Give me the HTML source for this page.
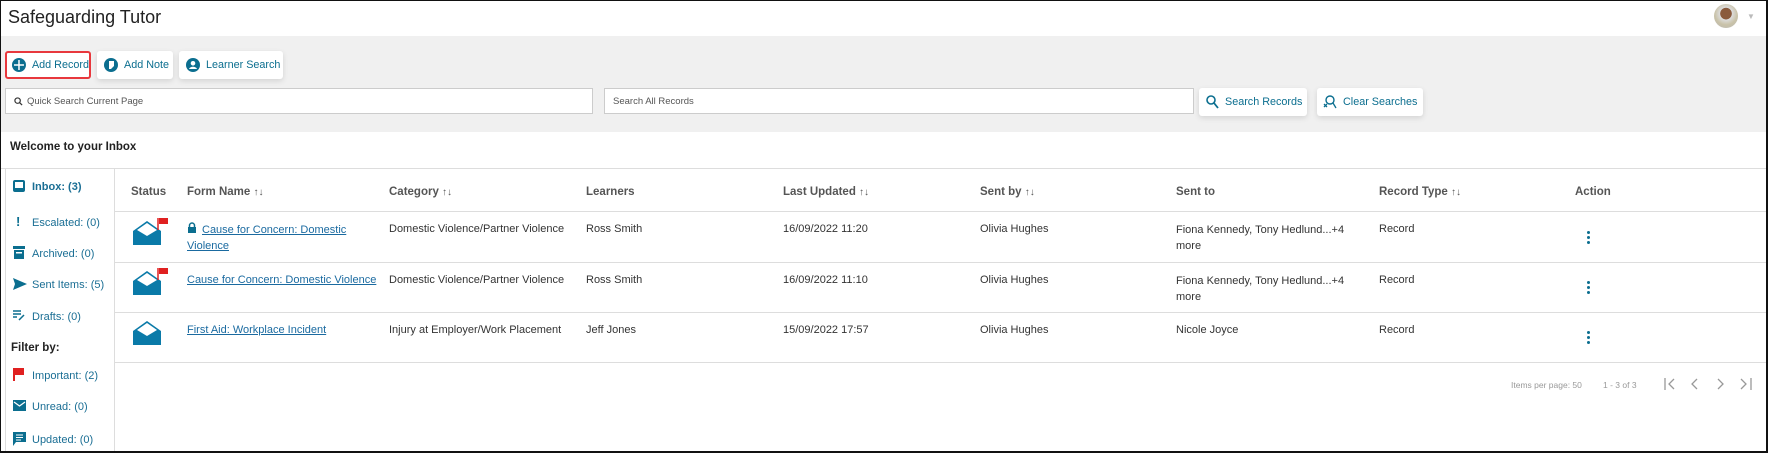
<!DOCTYPE html>
<html><head><meta charset="utf-8"><style>
*{box-sizing:border-box;margin:0;padding:0}
body{width:1768px;height:453px;overflow:hidden;background:#fff;font-family:"Liberation Sans",sans-serif;font-size:11px;color:#333;position:relative}
.a{position:absolute;white-space:nowrap}
.frame{position:absolute;left:0;top:0;width:1768px;height:453px;border:1px solid #111;border-right-width:2px;border-bottom-width:2px;pointer-events:none;z-index:9}
.btn{position:absolute;background:#fff;border-radius:3px;box-shadow:0 2px 6px rgba(0,0,0,.12);color:#0b6e8f;font-size:10.8px;display:flex;align-items:center;padding-left:7px;gap:6px;white-space:nowrap}
.inp{position:absolute;background:#fff;border:1px solid #ccc;font-size:9.5px;color:#555;display:flex;align-items:center;padding-left:8px;gap:4px}
.side{color:#1a6e94;font-size:11px}
.th{font-weight:bold;color:#555;font-size:11.5px}
.ln{position:absolute;height:1px;background:#ddd}
a{color:#1a6aa0;text-decoration:underline}
.dots{position:absolute;width:3px}
.dots i{display:block;width:3px;height:3px;background:#0b6e8f;border-radius:50%;margin-bottom:2px}
</style></head><body>
<div class="frame"></div>
<div class="a" style="left:8px;top:7px;font-size:18px;color:#222">Safeguarding Tutor</div>
<div class="a" style="left:1714px;top:4px;width:24px;height:24px;border-radius:50%;background:radial-gradient(circle at 50% 40%,#8a5a3c 0 30%,#ddd 32%,#c9c2a8 60%,#b8b8b8)"></div>
<div class="a" style="left:1747px;top:12px;color:#bbb;font-size:8px">▼</div>
<div class="a" style="left:1px;top:36px;width:1765px;height:96px;background:#f0f0f0"></div>

<div class="btn" style="left:5px;top:51px;width:86px;height:28px;border:2px solid #e8383d;box-shadow:none;padding-left:5px"><svg width="14" height="14" viewBox="0 0 14 14"><circle cx="7" cy="7" r="7" fill="#0b6e8f"/><path d="M7 2v10M2 7h10" stroke="#fff" stroke-width="1.5"/></svg>Add Record</div>
<div class="btn" style="left:97px;top:51px;width:76px;height:28px"><svg width="14" height="14" viewBox="0 0 14 14"><circle cx="7" cy="7" r="7" fill="#0b6e8f"/><path d="M5 3h5v5l-3 3H5z" fill="#fff"/></svg>Add Note</div>
<div class="btn" style="left:179px;top:51px;width:104px;height:28px"><svg width="14" height="14" viewBox="0 0 14 14"><circle cx="7" cy="7" r="7" fill="#0b6e8f"/><circle cx="7" cy="5.3" r="2.3" fill="#fff"/><path d="M3 11c1-3 7-3 8 0z" fill="#fff"/></svg>Learner Search</div>

<div class="inp" style="left:5px;top:88px;width:588px;height:26px"><svg width="9" height="9" viewBox="0 0 10 10"><circle cx="4" cy="4" r="3" fill="none" stroke="#333" stroke-width="1.3"/><path d="M6.3 6.3L9 9" stroke="#333" stroke-width="1.4"/></svg>Quick Search Current Page</div>
<div class="inp" style="left:604px;top:88px;width:590px;height:26px">Search All Records</div>
<div class="btn" style="left:1199px;top:88px;width:108px;height:28px;padding-left:7px"><svg width="13" height="14" viewBox="0 0 13 14"><circle cx="5" cy="5" r="4" fill="none" stroke="#0b6e8f" stroke-width="1.6"/><path d="M8 8l4 5" stroke="#0b6e8f" stroke-width="1.8"/></svg>Search Records</div>
<div class="btn" style="left:1317px;top:88px;width:106px;height:28px;padding-left:6px"><svg width="14" height="14" viewBox="0 0 14 14"><circle cx="7" cy="5" r="4" fill="none" stroke="#0b6e8f" stroke-width="1.4"/><path d="M10 8l3 5M1 9l3 3M4 9l-3 3" stroke="#0b6e8f" stroke-width="1.3"/></svg>Clear Searches</div>

<div class="a" style="left:10px;top:141px;font-weight:bold;font-size:11.5px;color:#222">Welcome to your Inbox</div>
<div class="ln" style="left:1px;top:168px;width:1765px"></div>
<div class="a" style="left:5px;top:169px;width:110px;height:284px;border-left:1px solid #ddd;border-right:1px solid #ddd"></div>

<div class="a side" style="left:13px;top:180px;font-weight:bold"><svg width="12" height="12" viewBox="0 0 12 12" style="vertical-align:-2px;margin-right:7px"><rect x="1" y="1" width="10" height="10" rx="1" fill="none" stroke="#0b6e8f" stroke-width="2"/><rect x="1" y="8" width="10" height="3" fill="#0b6e8f"/></svg>Inbox: (3)</div>
<div class="a side" style="left:13px;top:214px"><span style="display:inline-block;width:19px;font-weight:bold;color:#0b6e8f;padding-left:3px;font-size:13px">!</span>Escalated: (0)</div>
<div class="a side" style="left:13px;top:246px"><svg width="12" height="13" viewBox="0 0 12 13" style="vertical-align:-2px;margin-right:7px"><rect x="0" y="0" width="12" height="3" fill="#0b6e8f"/><rect x="1" y="4" width="10" height="9" fill="#0b6e8f"/><rect x="3" y="6" width="6" height="1.5" fill="#fff"/></svg>Archived: (0)</div>
<div class="a side" style="left:13px;top:278px"><svg width="14" height="12" viewBox="0 0 14 12" style="vertical-align:-2px;margin-right:5px"><path d="M0 0l14 6-14 6 2-6z" fill="#0b6e8f"/></svg>Sent Items: (5)</div>
<div class="a side" style="left:13px;top:310px"><svg width="13" height="11" viewBox="0 0 13 11" style="vertical-align:-1px;margin-right:6px"><path d="M0 1h8M0 4h8M0 7h4M6 10l5-5" stroke="#0b6e8f" stroke-width="1.5"/></svg>Drafts: (0)</div>
<div class="a" style="left:11px;top:342px;font-weight:bold;color:#222;font-size:11.5px">Filter by:</div>
<div class="a side" style="left:13px;top:368px"><svg width="12" height="13" viewBox="0 0 12 13" style="vertical-align:-2px;margin-right:7px"><path d="M1 0v13" stroke="#e02020" stroke-width="2"/><path d="M2 0h9v7H2z" fill="#e02020"/></svg>Important: (2)</div>
<div class="a side" style="left:13px;top:400px"><svg width="13" height="11" viewBox="0 0 13 11" style="vertical-align:-1px;margin-right:6px"><rect width="13" height="11" fill="#0b6e8f"/><path d="M1 2l5.5 4 5.5-4" stroke="#fff" fill="none" stroke-width="1.2"/></svg>Unread: (0)</div>
<div class="a side" style="left:13px;top:432px"><svg width="13" height="14" viewBox="0 0 13 14" style="vertical-align:-3px;margin-right:6px"><path d="M0 0h13v10H3l-3 4z" fill="#0b6e8f"/><path d="M3 3h7M3 5.5h7M3 8h5" stroke="#fff" stroke-width="1"/></svg>Updated: (0)</div>

<div class="a th" style="left:131px;top:186px">Status</div>
<div class="a th" style="left:187px;top:186px">Form Name <span style="font-size:10px">↑↓</span></div>
<div class="a th" style="left:389px;top:186px">Category <span style="font-size:10px">↑↓</span></div>
<div class="a th" style="left:586px;top:186px">Learners</div>
<div class="a th" style="left:783px;top:186px">Last Updated <span style="font-size:10px">↑↓</span></div>
<div class="a th" style="left:980px;top:186px">Sent by <span style="font-size:10px">↑↓</span></div>
<div class="a th" style="left:1176px;top:186px">Sent to</div>
<div class="a th" style="left:1379px;top:186px">Record Type <span style="font-size:10px">↑↓</span></div>
<div class="a th" style="left:1575px;top:186px">Action</div>
<div class="ln" style="left:115px;top:211px;width:1651px"></div>
<div class="ln" style="left:115px;top:262px;width:1651px"></div>
<div class="ln" style="left:115px;top:312px;width:1651px"></div>
<div class="ln" style="left:115px;top:362px;width:1651px"></div>

<svg class="a" style="left:133px;top:218px" width="37" height="30" viewBox="0 0 37 30"><path d="M0 13L14 3 28 13V27H0z" fill="#0a7aa8"/><path d="M4 12L14 5l10 7-10 6z" fill="#fff"/><path d="M25 0v12" stroke="#e02020" stroke-width="1.5"/><path d="M26 0h9v6h-9z" fill="#e02020"/></svg>
<svg class="a" style="left:133px;top:268px" width="37" height="30" viewBox="0 0 37 30"><path d="M0 13L14 3 28 13V27H0z" fill="#0a7aa8"/><path d="M4 12L14 5l10 7-10 6z" fill="#fff"/><path d="M25 0v12" stroke="#e02020" stroke-width="1.5"/><path d="M26 0h9v6h-9z" fill="#e02020"/></svg>
<svg class="a" style="left:133px;top:318px" width="37" height="30" viewBox="0 0 37 30"><path d="M0 13L14 3 28 13V27H0z" fill="#0a7aa8"/><path d="M4 12L14 5l10 7-10 6z" fill="#fff"/></svg>

<div class="a" style="left:187px;top:222px;line-height:16px"><svg width="10" height="11" viewBox="0 0 10 11" style="vertical-align:0;margin-right:5px"><path d="M2.5 5V3.5a2.5 2.5 0 015 0V5" fill="none" stroke="#0b6e8f" stroke-width="1.5"/><rect x="1" y="5" width="8" height="6" fill="#0b6e8f"/></svg><a>Cause for Concern: Domestic</a><br><a>Violence</a></div>
<div class="a" style="left:389px;top:223px">Domestic Violence/Partner Violence</div>
<div class="a" style="left:586px;top:223px">Ross Smith</div>
<div class="a" style="left:783px;top:223px">16/09/2022 11:20</div>
<div class="a" style="left:980px;top:223px">Olivia Hughes</div>
<div class="a" style="left:1176px;top:222px;line-height:16px">Fiona Kennedy, Tony Hedlund...+4<br>more</div>
<div class="a" style="left:1379px;top:223px">Record</div>
<div class="dots" style="left:1587px;top:231px"><i></i><i></i><i></i></div>

<div class="a" style="left:187px;top:274px"><a>Cause for Concern: Domestic Violence</a></div>
<div class="a" style="left:389px;top:274px">Domestic Violence/Partner Violence</div>
<div class="a" style="left:586px;top:274px">Ross Smith</div>
<div class="a" style="left:783px;top:274px">16/09/2022 11:10</div>
<div class="a" style="left:980px;top:274px">Olivia Hughes</div>
<div class="a" style="left:1176px;top:273px;line-height:16px">Fiona Kennedy, Tony Hedlund...+4<br>more</div>
<div class="a" style="left:1379px;top:274px">Record</div>
<div class="dots" style="left:1587px;top:281px"><i></i><i></i><i></i></div>

<div class="a" style="left:187px;top:324px"><a>First Aid: Workplace Incident</a></div>
<div class="a" style="left:389px;top:324px">Injury at Employer/Work Placement</div>
<div class="a" style="left:586px;top:324px">Jeff Jones</div>
<div class="a" style="left:783px;top:324px">15/09/2022 17:57</div>
<div class="a" style="left:980px;top:324px">Olivia Hughes</div>
<div class="a" style="left:1176px;top:324px">Nicole Joyce</div>
<div class="a" style="left:1379px;top:324px">Record</div>
<div class="dots" style="left:1587px;top:331px"><i></i><i></i><i></i></div>

<div class="a" style="left:1511px;top:380px;font-size:8.5px;color:#999">Items per page: 50</div>
<div class="a" style="left:1603px;top:380px;font-size:8.5px;color:#999">1 - 3 of 3</div>
<svg class="a" style="left:1664px;top:377px" width="100" height="14" viewBox="0 0 100 14"><g fill="none" stroke="#999" stroke-width="1.3"><path d="M1 1v12M10 2L5 7l5 5"/><path d="M33 2l-5 5 5 5"/><path d="M54 2l5 5-5 5"/><path d="M77 2l5 5-5 5M87 1v12"/></g></svg>
</body></html>
